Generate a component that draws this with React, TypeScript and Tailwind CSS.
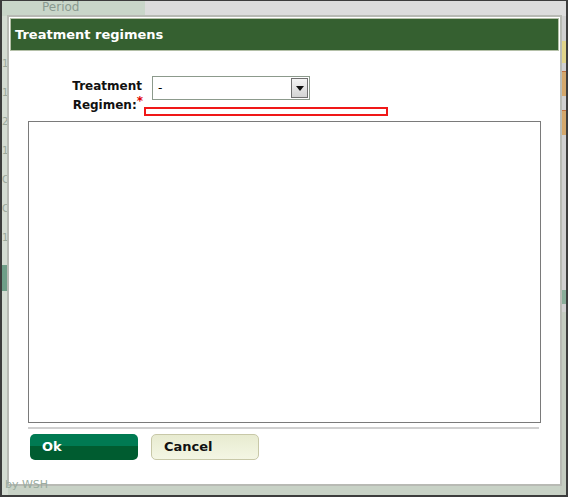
import React from "react";

const font = { fontFamily: '"DejaVu Sans", Verdana, sans-serif' };

export default function App() {
  return (
    <div
      className="relative w-[568px] h-[497px] overflow-hidden bg-[#c8d2c6] border-2 border-t border-[#3c3c3c]"
      style={font}
    >
      {/* page behind the overlay */}
      <div className="flex h-[15px]">
        <div className="w-[143px] bg-[#c9d6c9] text-[12px] leading-[13px] text-[#8a9a90] pl-[40px]">
          Period
        </div>
        <div className="flex-1 bg-[#dcdcdc]" />
      </div>
      <div className="flex h-[480px]">
        <div className="w-[6px] flex flex-col gap-[14px] pt-[40px] text-[10px] text-[#9aa89c] bg-[#d4dcd2] overflow-hidden">
          <span>1</span>
          <span>1</span>
          <span>2</span>
          <span>1</span>
          <span>C</span>
          <span>C</span>
          <span>1</span>
          <div className="h-[26px] bg-[#6f9e88] mt-[6px]" />
        </div>
        <div className="flex-1" />
        <div className="w-[6px] flex flex-col bg-[#d0d0d0]">
          <div className="h-[22px] mt-[25px] bg-[#e0d48a]" />
          <div className="h-[25px] mt-[8px] bg-[#d4a86c] border-t border-[#c07040]" />
          <div className="h-[25px] mt-[14px] bg-[#d4a86c] border-t border-[#c07040]" />
          <div className="h-[14px] mt-[155px] bg-[#8aae9a]" />
          <div className="flex-1 mt-[8px] bg-[#c4ccc0]" />
        </div>
      </div>

      {/* dialog */}
      <div className="absolute left-[5px] top-[14px] w-[555px] h-[471px] bg-white border-2 border-[#b8bab4] p-[1px] flex flex-col">
        <div className="h-[33px] bg-[#356030] border border-[#b4c0a8] flex items-center pl-[4px]">
          <span className="text-white font-bold text-[13px]">Treatment regimens</span>
        </div>

        <div className="flex flex-col pl-[18px] pr-[18px]">
          <div className="flex mt-[25px]">
            <div className="w-[115px] flex flex-col items-end text-[12px] font-bold text-[#111] leading-[19px] pt-[1px]">
              <span className="pr-[1px]">Treatment</span>
              <span>
                Regimen:<span className="text-[#e00000] align-top text-[12px] leading-[10px]">*</span>
              </span>
            </div>
            <div className="flex flex-col ml-[1px]">
              <div className="ml-[8px] w-[158px] h-[24px] border border-[#8c9a8c] flex items-center justify-between pl-[5px] pr-[1px]">
                <span className="text-[12px] text-black">-</span>
                <div className="w-[17px] h-[20px] border border-[#707070] bg-gradient-to-b from-[#f4f4f4] to-[#d4d4d4] flex items-center justify-center">
                  <svg width="8" height="5" viewBox="0 0 8 5">
                    <path d="M0 0h8L4 5z" fill="#111" />
                  </svg>
                </div>
              </div>
              <div className="mt-[7px] w-[244px] h-[9px] border-2 border-[#f01818]" />
            </div>
          </div>

          <div className="mt-[5px] h-[302px] border border-[#7a7a7a] bg-white" />
          <div className="mt-[4px] mr-[2px] h-[2px] bg-[#d0d0d0]" />

          <div className="flex gap-[13px] mt-[5px] pl-[2px]">
            <button className="relative w-[108px] h-[26px] rounded-[5px] overflow-hidden text-left pl-[12px] text-white font-bold text-[13px]">
              <span className="absolute inset-0 flex flex-col">
                <span className="h-[12px] bg-[#007a52]" />
                <span className="flex-1 bg-[#005c30]" />
              </span>
              <span className="relative">Ok</span>
            </button>
            <button className="w-[108px] h-[26px] rounded-[5px] border border-[#c8c8a8] bg-gradient-to-b from-[#e8ebd0] to-[#f4f6e4] text-left pl-[12px] text-[#111] font-bold text-[13px]">
              Cancel
            </button>
          </div>
        </div>
      </div>

      {/* faint footer text behind */}
      <div className="absolute left-[3px] top-[476px] text-[11px] text-[#9aaca0]">by WSH</div>
    </div>
  );
}
